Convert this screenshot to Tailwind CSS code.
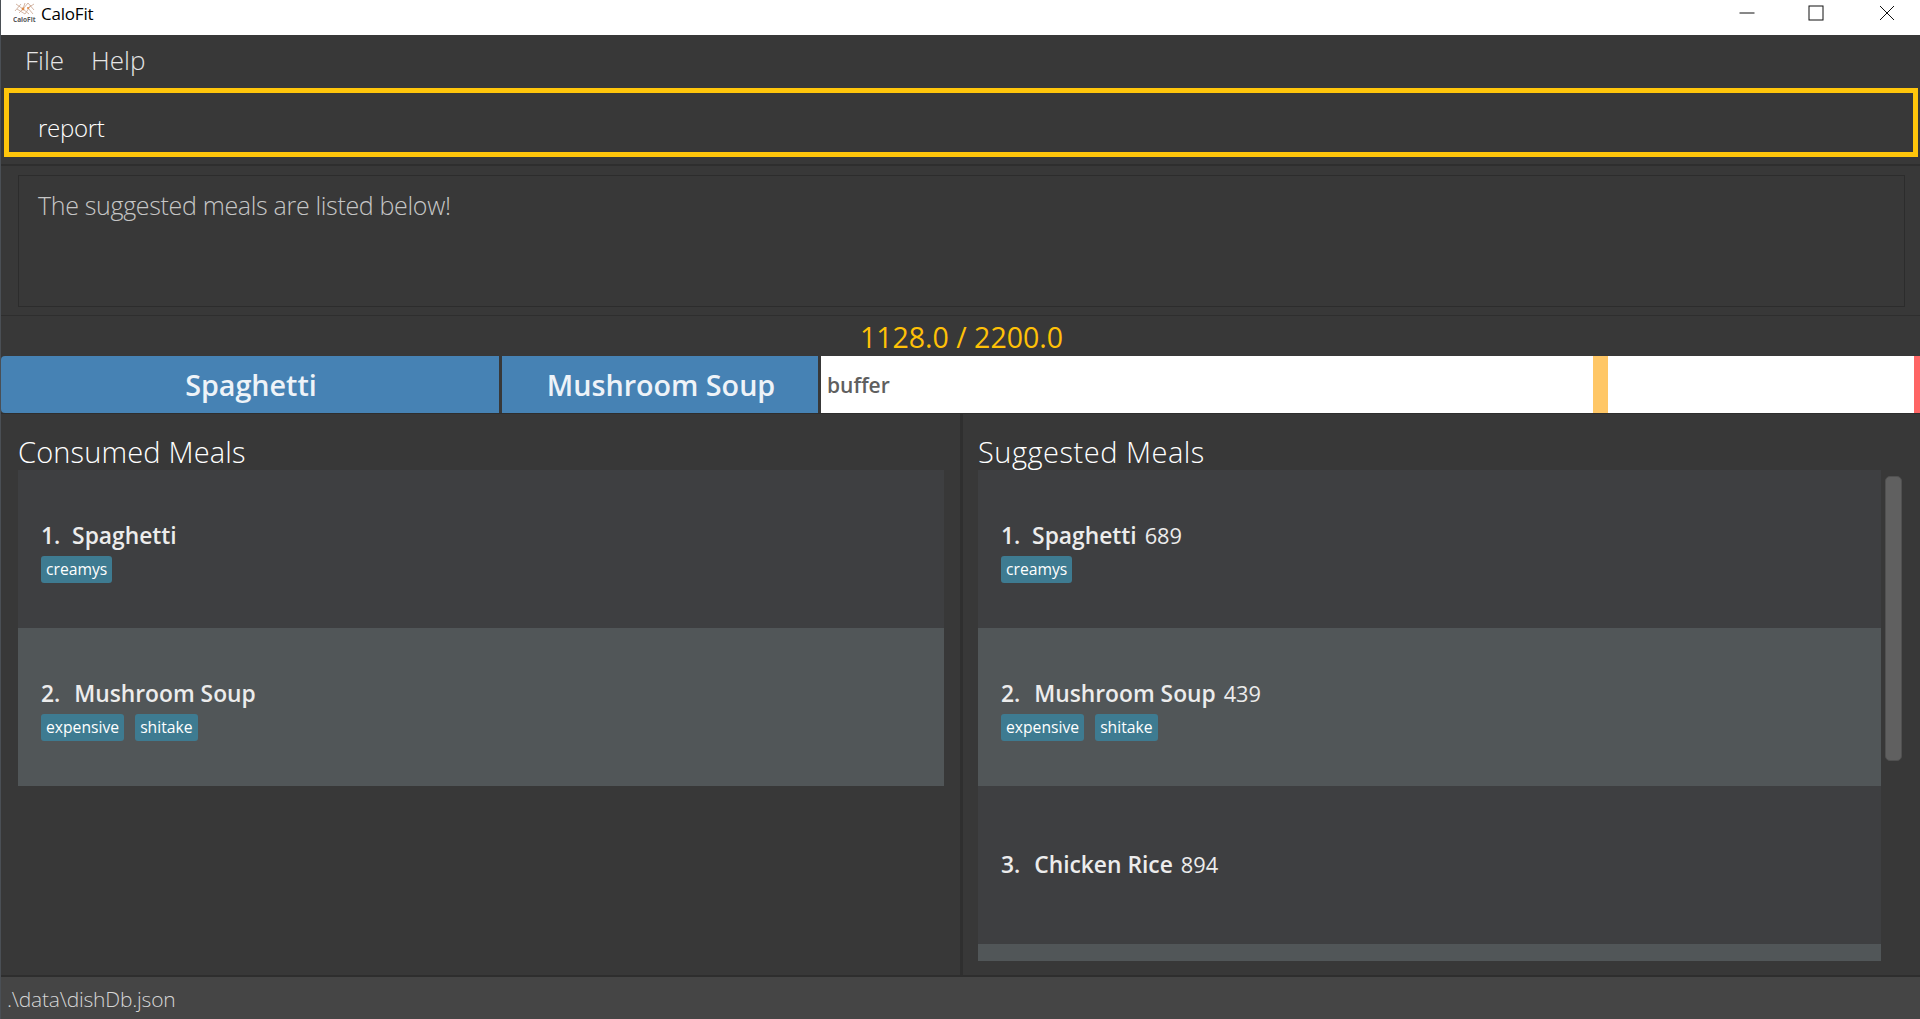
<!DOCTYPE html>
<html lang="en">

<head>
    <meta charset="UTF-8">
    <title>CaloFit</title>
    <script src="https://cdn.jsdelivr.net/npm/@tailwindcss/browser@4"></script>
</head>

<body class="bg-[#383838] font-['Open_Sans',sans-serif] overflow-hidden">
    <div class="h-[1019px] w-[1920px] flex flex-col border-l border-[#4a4f55]">

        <!-- Title bar -->
        <div class="h-[35px] bg-white flex items-center shrink-0 pb-[9px]">
            <svg class="ml-[12px] w-[24px] h-[24px]" viewBox="0 0 24 24" fill="none">
                <path d="M3 3l7 5 5-6 6 7M6 12l4-4 6 5M12 2l-2 6M4 8l8 5 6-9M21 3l-6 4 5 6M2 10l6-7" stroke="#c9a58f" stroke-width="0.8" />
                <circle cx="10" cy="8" r="1.4" fill="#e08a45" />
                <circle cx="15" cy="7" r="1" fill="#e08a45" />
                <text x="0" y="21" font-size="6.5" font-weight="700" fill="#555" font-family="Open Sans">CaloFit</text>
            </svg>
            <span class="ml-[4px] text-[17px] text-black leading-none -tracking-[0.2px]">CaloFit</span>
            <div class="ml-auto flex items-center">
                <svg class="w-[16px] h-[16px] mr-[53px]" viewBox="0 0 16 16"><path d="M0.5 8H15.5" stroke="#111" stroke-width="1" /></svg>
                <svg class="w-[16px] h-[16px] mr-[55px]" viewBox="0 0 16 16"><rect x="1" y="1" width="14" height="14" fill="none" stroke="#111" stroke-width="1" /></svg>
                <svg class="w-[16px] h-[16px] mr-[25px]" viewBox="0 0 16 16"><path d="M1 1L15 15M15 1L1 15" stroke="#111" stroke-width="1" /></svg>
            </div>
        </div>

        <!-- Menu -->
        <div class="h-[53px] flex items-center shrink-0 pl-[24px] gap-[27px] text-[26px] font-light text-[#e6e6e6] pb-[2px]">
            <span>File</span>
            <span>Help</span>
        </div>

        <!-- Command box -->
        <div class="h-[69px] ml-[3px] mr-[2px] border-[5px] border-[#ffc60b] shrink-0 flex items-center pl-[29px] pt-[10px] text-[24px] font-light text-white -tracking-[0.3px]">
            report
        </div>

        <div class="h-[9px] border-b-2 border-[#2e2e2e] shrink-0"></div>

        <!-- Result box -->
        <div class="h-[150px] border-b border-[#2e2e2e] shrink-0 pt-[9px] pl-[17px] pr-[15px]">
            <div class="h-[132px] border border-[#2c2c2c] pl-[19px] pt-[11px] text-[25px] font-light text-[#c6c6c6] leading-[36px] -tracking-[0.33px]">
                The suggested meals are listed below!
            </div>
        </div>

        <!-- Calories -->
        <div class="h-[40px] shrink-0 flex items-center justify-center text-[28.5px] text-[#ffc107] pt-[2px] pl-[2px]">
            1128.0 / 2200.0
        </div>

        <!-- Calorie bar -->
        <div class="h-[57px] shrink-0 flex text-[28.7px] font-semibold text-[#eef3f8]">
            <div class="w-[498px] bg-[#4682b4] rounded-l-[4px] flex items-center justify-center pl-[2px]">Spaghetti</div>
            <div class="w-[316px] ml-[3px] bg-[#4682b4] flex items-center justify-center pl-[2px]">Mushroom Soup</div>
            <div class="flex-1 ml-[3px] bg-white flex">
                <div class="w-[772px] flex items-center pl-[6px] pt-[2px] text-[21px] font-semibold text-[#5f5f5f]">buffer</div>
                <div class="w-[15px] bg-[#ffc766]"></div>
                <div class="flex-1"></div>
                <div class="w-[6px] bg-[#ff6666]"></div>
            </div>
        </div>

        <!-- Lists -->
        <div class="flex-1 min-h-0 flex border-t border-[#2e2e2e]">

            <!-- Consumed meals -->
            <div class="w-[959px] pl-[17px] pr-[16px] flex flex-col">
                <h2 class="h-[56px] text-[29px] font-light text-white leading-[37px] pt-[19px] tracking-[0.15px]">Consumed Meals</h2>
                <div class="flex-1">
                    <div class="h-[158px] bg-[#3e3f41] pl-[23px] pt-[50px]">
                        <div class="text-[22.8px] text-[#ececec] leading-[32px] font-semibold">1.&nbsp; Spaghetti</div>
                        <div class="flex gap-[11px] mt-[4px]">
                            <span class="h-[27px] px-[5px] bg-[#3e7b91] rounded-[3px] text-[15.7px] leading-[26px] text-white">creamys</span>
                        </div>
                    </div>
                    <div class="h-[158px] bg-[#515658] pl-[23px] pt-[50px]">
                        <div class="text-[22.8px] text-[#ececec] leading-[32px] font-semibold">2.&nbsp;<span class="ml-[8px]">Mushroom Soup</span></div>
                        <div class="flex gap-[11px] mt-[4px]">
                            <span class="h-[27px] px-[5px] bg-[#3e7b91] rounded-[3px] text-[15.7px] leading-[26px] text-white">expensive</span>
                            <span class="h-[27px] px-[5px] bg-[#3e7b91] rounded-[3px] text-[15.7px] leading-[26px] text-white">shitake</span>
                        </div>
                    </div>
                </div>
            </div>

            <div class="w-[3px] bg-[#2f2f2f]"></div>

            <!-- Suggested meals -->
            <div class="flex-1 pl-[15px] flex flex-col">
                <h2 class="h-[56px] text-[29px] font-light text-white leading-[37px] pt-[19px] tracking-[0.5px]">Suggested Meals</h2>
                <div class="flex h-[491px]">
                    <div class="w-[903px] overflow-hidden">
                        <div class="h-[158px] bg-[#3e3f41] pl-[23px] pt-[50px]">
                            <div class="text-[22.8px] font-semibold text-[#ececec] leading-[32px] h-[32px]">1.&nbsp; Spaghetti <span class="ml-[2px] text-[21.8px] font-normal leading-none">689</span></div>
                            <div class="flex gap-[11px] mt-[4px]">
                                <span class="h-[27px] px-[5px] bg-[#3e7b91] rounded-[3px] text-[15.7px] leading-[26px] text-white">creamys</span>
                            </div>
                        </div>
                        <div class="h-[158px] bg-[#515658] pl-[23px] pt-[50px]">
                            <div class="text-[22.8px] font-semibold text-[#ececec] leading-[32px] h-[32px]">2.&nbsp;<span class="ml-[8px]">Mushroom Soup</span> <span class="ml-[2px] text-[21.8px] font-normal leading-none">439</span></div>
                            <div class="flex gap-[11px] mt-[4px]">
                                <span class="h-[27px] px-[5px] bg-[#3e7b91] rounded-[3px] text-[15.7px] leading-[26px] text-white">expensive</span>
                                <span class="h-[27px] px-[5px] bg-[#3e7b91] rounded-[3px] text-[15.7px] leading-[26px] text-white">shitake</span>
                            </div>
                        </div>
                        <div class="h-[158px] bg-[#3e3f41] pl-[23px] pt-[63px]">
                            <div class="text-[22.8px] font-semibold text-[#ececec] leading-[32px] h-[32px]">3.&nbsp;<span class="ml-[8px]">Chicken Rice</span> <span class="ml-[2px] text-[21.8px] font-normal leading-none">894</span></div>
                        </div>
                        <div class="h-[17px] bg-[#515658]"></div>
                    </div>
                    <div class="ml-[4px] mt-[6px] w-[17px] h-[285px] bg-[#606060] border border-[#505050] rounded-[5px]"></div>
                </div>
            </div>
        </div>

        <!-- Status bar -->
        <div class="h-[44px] shrink-0 bg-[#454545] border-t-2 border-[#2e2e2e] pl-[6px] pt-[3px] flex items-center text-[21px] font-light text-[#d6d6d6] -tracking-[0.2px]">
            .\data\dishDb.json
        </div>
    </div>
</body>

</html>
